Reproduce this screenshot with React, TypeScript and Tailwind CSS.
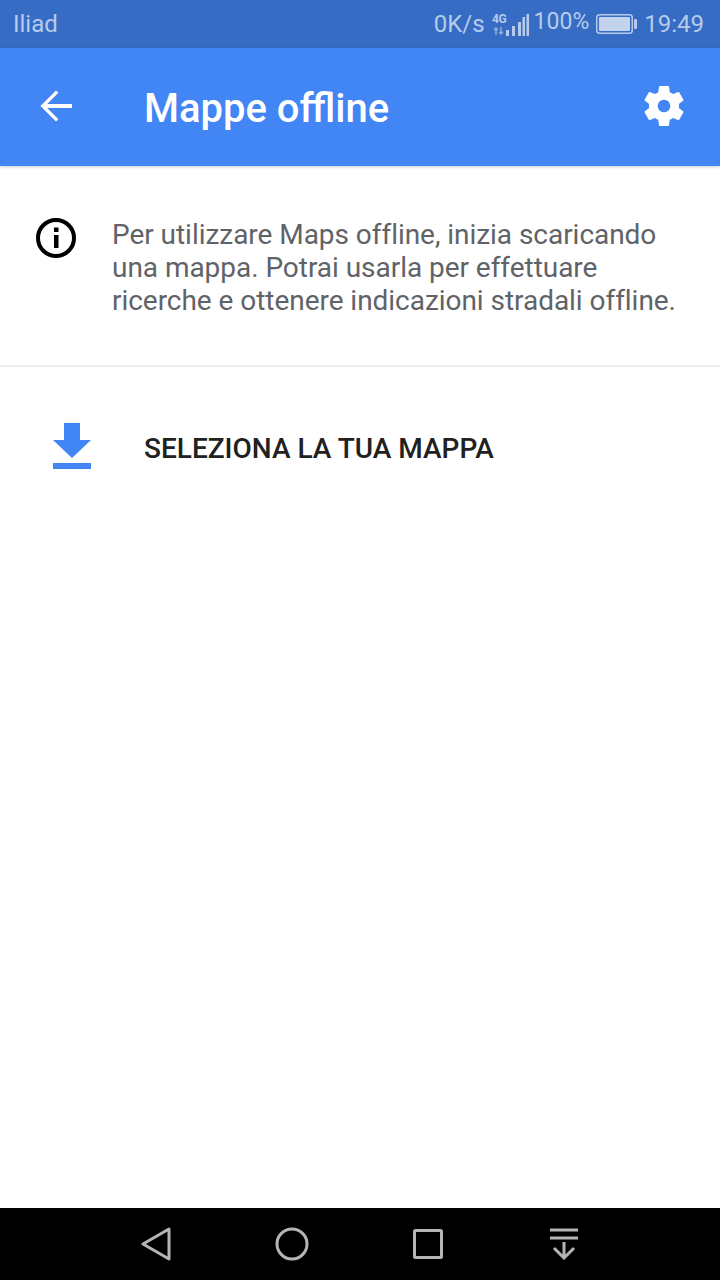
export default function App() {
  return (
    <div className="flex h-[1280px] w-[720px] flex-col overflow-hidden bg-white font-['Roboto',sans-serif]">
      {/* Status bar */}
      <div className="flex h-12 items-center justify-between bg-[#366cc3] pl-[13px] pr-4 text-2xl text-[#b6cbec]">
        <span>Iliad</span>
        <div className="flex items-center">
          <span>0K/s</span>
          <div className="ml-[8px] flex h-6 items-end">
            <div className="flex w-[13px] flex-col items-center">
              <span className="text-[12px] font-bold leading-[11px] tracking-[-0.5px]">4G</span>
              <svg width="13" height="11" viewBox="0 0 13 11" fill="none" stroke="#8fadde" strokeWidth="1.5">
                <path d="M3 10V3M1 5l2-2 2 2M8 2v7M6 7l2 2 2-2" />
              </svg>
            </div>
            <svg width="23" height="22" viewBox="0 0 23 22" fill="#b6cbec">
              <rect x="0" y="16" width="3" height="6" />
              <rect x="6" y="12" width="3" height="10" />
              <rect x="12" y="8" width="3" height="14" />
              <rect x="16.5" y="3" width="2.5" height="19" />
              <rect x="20.5" y="0" width="2.5" height="22" />
            </svg>
          </div>
          <span className="ml-[5px] -mt-[3px] text-[23px]">100%</span>
          <svg className="ml-[7px]" width="41" height="20" viewBox="0 0 41 20" fill="none">
            <rect x="0.75" y="0.75" width="35.5" height="18.5" rx="3" stroke="#b6cbec" strokeWidth="1.5" />
            <rect x="3" y="3" width="31" height="14" rx="1" fill="#c3d3ee" />
            <rect x="38" y="5" width="3" height="10" rx="1" fill="#b6cbec" />
          </svg>
          <span className="ml-[7px]">19:49</span>
        </div>
      </div>

      {/* App bar */}
      <header className="z-10 flex h-[118px] shrink-0 items-center bg-[#4285f4] pb-[3px] shadow-[0_1px_3px_rgba(0,0,0,0.2)]">
        <svg className="ml-8" width="48" height="48" viewBox="0 0 24 24" fill="white">
          <path d="M20 11H7.6l5.6-5.6L12 4.2 4.2 12l7.8 7.8 1.2-1.2L7.6 13H20z" />
        </svg>
        <h1 className="ml-[64px] mt-[7px] text-[40px] font-medium leading-none text-white">Mappe offline</h1>
        <svg className="ml-auto mr-[31px]" width="50" height="50" viewBox="0 0 24 24" fill="white">
          <path
            fillRule="evenodd"
            d="M19.14 12.94c.04-.3.06-.61.06-.94 0-.32-.02-.64-.07-.94l2.03-1.58c.18-.14.23-.41.12-.61l-1.92-3.32c-.12-.22-.37-.29-.59-.22l-2.39.96c-.5-.38-1.03-.7-1.62-.94l-.36-2.54c-.04-.24-.24-.41-.48-.41h-3.84c-.24 0-.43.17-.47.41l-.36 2.54c-.59.24-1.13.57-1.62.94l-2.39-.96c-.22-.08-.47 0-.59.22L2.74 8.87c-.12.21-.08.47.12.61l2.03 1.58c-.05.3-.09.63-.09.94s.02.64.07.94l-2.03 1.58c-.18.14-.23.41-.12.61l1.92 3.32c.12.22.37.29.59.22l2.39-.96c.5.38 1.03.7 1.62.94l.36 2.54c.05.24.24.41.48.41h3.84c.24 0 .44-.17.47-.41l.36-2.54c.59-.24 1.13-.56 1.62-.94l2.39.96c.22.08.47 0 .59-.22l1.92-3.32c.12-.22.07-.47-.12-.61l-2.01-1.58zM12 15c-1.65 0-3-1.35-3-3s1.35-3 3-3 3 1.35 3 3-1.35 3-3 3z"
          />
        </svg>
      </header>

      {/* Info */}
      <section className="flex h-[201px] shrink-0 border-b-2 border-[#eeeeee] pl-9 pt-[52px]">
        <svg className="shrink-0" width="40" height="40" viewBox="0 0 40 40" fill="none">
          <circle cx="20" cy="20" r="18" stroke="black" strokeWidth="4" />
          <rect x="18" y="9.5" width="4.5" height="4.5" fill="black" />
          <rect x="18" y="17" width="4.5" height="13" fill="black" />
        </svg>
        <p className="ml-9 text-[28px] leading-[33px] tracking-[-0.04px] text-[#5f6368]">
          Per utilizzare Maps offline, inizia scaricando
          <br />
          una mappa. Potrai usarla per effettuare
          <br />
          ricerche e ottenere indicazioni stradali offline.
        </p>
      </section>

      {/* Select map */}
      <div className="flex h-[164px] shrink-0 items-center pl-[53px]">
        <svg className="-mt-[7px] shrink-0" width="38" height="46" viewBox="0 0 38 46" fill="#4285f4">
          <path d="M11 0h16v17h11L19 35 0 17h11z" />
          <rect x="0" y="40" width="38" height="6" />
        </svg>
        <span className="ml-[53px] text-[28px] font-medium text-[#212121]">SELEZIONA LA TUA MAPPA</span>
      </div>

      <div className="flex-1" />

      {/* Nav bar */}
      <nav className="flex h-[72px] shrink-0 items-center bg-black pl-[141px]">
        <svg width="30" height="34" viewBox="0 0 30 34" fill="none" stroke="#b5b5b5" strokeWidth="3" strokeLinejoin="round">
          <path d="M28 2 2 17l26 15z" />
        </svg>
        <svg className="ml-[104px]" width="34" height="34" viewBox="0 0 34 34" fill="none" stroke="#b5b5b5" strokeWidth="3">
          <circle cx="17" cy="17" r="15" />
        </svg>
        <svg className="ml-[104px]" width="30" height="30" viewBox="0 0 30 30" fill="none" stroke="#b5b5b5" strokeWidth="3" strokeLinejoin="round">
          <rect x="1.5" y="1.5" width="27" height="27" rx="1" />
        </svg>
        <svg className="ml-[107px]" width="28" height="32" viewBox="0 0 28 32" fill="none" stroke="#b5b5b5" strokeWidth="3">
          <path d="M0 2h28M0 10h28M14 14v16M4 20l10 10 10-10" />
        </svg>
      </nav>
    </div>
  );
}
